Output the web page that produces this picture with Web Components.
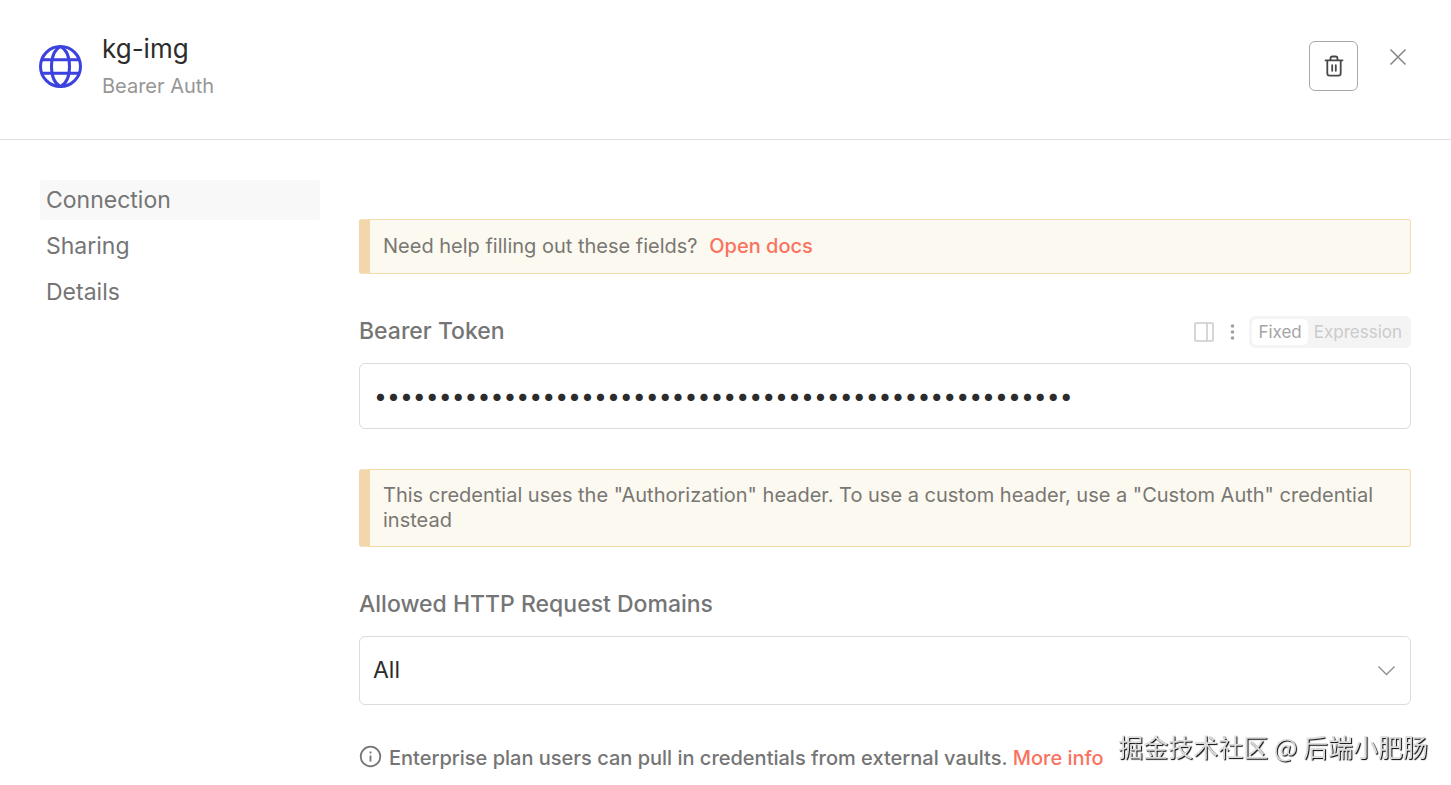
<!DOCTYPE html>
<html lang="en">
<head>
<meta charset="utf-8">
<title>kg-img – Bearer Auth</title>
<style>
  body { margin: 0; background: #fff; font-family: Inter, "Noto Sans CJK SC", sans-serif; color: #757575; }
</style>
</head>
<body>
<credential-dialog></credential-dialog>
<script>
const define = (name, html, setup) => {
  const tpl = document.createElement('template');
  tpl.innerHTML = '<style>*{box-sizing:border-box}button,input,select{font:inherit;color:inherit;margin:0}svg{display:block;flex:none}</style>' + html;
  customElements.define(name, class extends HTMLElement {
    constructor() {
      super();
      this.attachShadow({ mode: 'open' }).append(tpl.content.cloneNode(true));
    }
    connectedCallback() { if (setup) setup(this, this.shadowRoot); }
  });
};

define('credential-header', `
<style>
  :host { display: flex; align-items: flex-start; height: 140px; box-sizing: border-box; padding: 32px 44px 0 38px; border-bottom: 1px solid #dedede; }
  .globe { margin: 12px 19px 0 0; }
  .names { flex: 1; }
  h1 { margin: 0; font-size: 26px; line-height: 34px; font-weight: 400; color: #2c2c2c; }
  p { margin: 8px 0 0; font-size: 20px; line-height: 24px; color: #969696; }
  button { display: grid; place-items: center; padding: 0; background: none; border: 0; }
  .delete { width: 49px; height: 50px; margin: 9px 31px 0 0; border: 1px solid #a8a8a8; border-radius: 6px; color: #484848; }
  .close { margin-top: 16px; color: #858585; }
</style>
<svg class="globe" width="45" height="45" viewBox="0 0 45 45" fill="none" stroke="#3b42de" stroke-width="3" aria-hidden="true">
  <circle cx="22.500" cy="22.500" r="20"/><path d="M22.500 2.500c-6 3-9 11-9 20s3 17 9 20c6-3 9-11 9-20s-3-17-9-20M4.500 15.800h36M4.500 29.200h36"/>
</svg>
<div class="names"><h1><slot name="title"></slot></h1><p><slot name="type"></slot></p></div>
<button class="delete" aria-label="Delete">
  <svg width="20" height="22" viewBox="0 0 20 22" fill="none" stroke="currentColor" stroke-width="1.800" stroke-linecap="round" stroke-linejoin="round"><path d="M1.500 5.300h17M3.300 5.300v13q0 2.400 2.400 2.400h8.600q2.400 0 2.400-2.400v-13M6.500 5V3.500Q6.500 1.500 8.500 1.500h3q2 0 2 2V5M8.200 10.200v5.600M11.800 10.200v5.600"/></svg>
</button>
<button class="close" aria-label="Close">
  <svg width="18" height="18" viewBox="0 0 18 18" fill="none" stroke="currentColor" stroke-width="1.500"><path d="M1.500 1.500l15 15M16.500 1.500l-15 15"/></svg>
</button>`);

define('side-menu', `
<style>
  :host { display: block; width: 280px; flex: none; }
  nav { display: grid; gap: 6px; }
  ::slotted(a) { display: block; padding: 0 6px; border-radius: 3px; font-size: 23px; line-height: 40px; color: #757575; text-decoration: none; }
  ::slotted(a[aria-current]) { background: #f8f8f8; }
</style>
<nav><slot></slot></nav>`);

define('notice-bar', `
<style>
  :host { display: flex; align-items: center; box-sizing: border-box; min-height: 55px; padding: 13px; border: 1px solid #f3dcae; border-left: 11px solid #f3d6aa; border-radius: 3px; background: #fcf9f0; font-size: 20px; line-height: 25px; color: #787773; }
  ::slotted(a) { margin-left: 6px; color: #f9735f; font-weight: 500; text-decoration: none; }
</style>
<div><slot></slot></div>`);

define('mode-switch', `
<style>
  :host { display: flex; align-items: center; color: #b5b5b5; }
  button { display: block; border: 0; padding: 0; background: none; }
  .dots { margin: 0 14px 0 16px; }
  .group { display: flex; padding: 3px; border-radius: 6px; background: #f4f4f4; font-size: 17px; }
  .group button { height: 26px; line-height: 26px; padding: 0 6px; border-radius: 5px; color: #cbcbcb; }
  .group button[aria-pressed=true] { background: #fff; color: #a5a5a5; }
</style>
<button aria-label="Side panel"><svg width="20" height="20" viewBox="0 0 20 20" fill="none" stroke="#cacaca" stroke-width="1.500"><rect x="1" y="1" width="18" height="18" rx="1"/><path d="M13 1v18"/></svg></button>
<button class="dots" aria-label="Options"><svg width="5" height="18" viewBox="0 0 5 18" fill="#a0a0a0"><circle cx="2.500" cy="3" r="1.800"/><circle cx="2.500" cy="9" r="1.800"/><circle cx="2.500" cy="15" r="1.800"/></svg></button>
<div class="group"><button aria-pressed="true">Fixed</button><button aria-pressed="false">Expression</button></div>`);

define('token-field', `
<style>
  :host { display: block; }
  .top { display: flex; justify-content: space-between; align-items: flex-start; height: 32px; margin-bottom: 15px; }
  label { font-size: 23px; line-height: 30px; font-weight: 500; }
  input { display: block; width: 100%; height: 66px; padding: 0 14px; border: 1px solid #dcdcdc; border-radius: 6px; background: #fff; color: #2c2c2c; font-size: 23px; outline: 0; }
</style>
<div class="top"><label for="token">Bearer Token</label><mode-switch></mode-switch></div>
<input id="token" type="password">`, (host, root) => {
  root.querySelector('input').value = 'x'.repeat(54);
});

define('domain-field', `
<style>
  :host { display: block; }
  label { display: block; margin-bottom: 17px; font-size: 23px; line-height: 30px; font-weight: 500; }
  .box { display: grid; align-items: center; }
  select, svg { grid-area: 1 / 1; }
  select { appearance: none; width: 100%; height: 69px; padding: 0 13px 2px; border: 1px solid #dcdcdc; border-radius: 6px; background: #fff; color: #2c2c2c; font-size: 23px; }
  svg { justify-self: end; margin-right: 15px; pointer-events: none; z-index: 1; }
</style>
<label for="domains">Allowed HTTP Request Domains</label>
<div class="box"><select id="domains"><option>All</option></select>
<svg width="19" height="12" viewBox="0 0 19 12" fill="none" stroke="#8c8c8c" stroke-width="1.300"><path d="M1.500 1.500l8 8 8-8"/></svg></div>`);

define('info-tip', `
<style>
  :host { display: flex; align-items: flex-start; gap: 7px; font-size: 20px; line-height: 26px; font-weight: 500; }
  ::slotted(a) { color: #f9735f; text-decoration: none; }
</style>
<svg width="23" height="23" viewBox="0 0 23 23" fill="none" stroke="#757575" stroke-width="1.800" aria-hidden="true"><circle cx="11.500" cy="11.500" r="9.800"/><path d="M11.500 10.500v6M11.500 6.500v2"/></svg>
<span><slot></slot></span>`);

define('water-mark', `
<style>
  :host { position: fixed; right: 23px; bottom: 21px; font-family: "Noto Sans CJK SC", sans-serif; font-size: 25px; line-height: 36px; color: #dcdcdc; text-shadow: 1px 1px 1px #000; pointer-events: none; white-space: nowrap; }
</style>
<slot></slot>`);

define('credential-dialog', `
<style>
  :host { display: block; }
  .body { display: flex; gap: 39px; padding: 40px 40px 0; }
  main { flex: 1; min-width: 0; padding-top: 39px; }
  token-field { margin: 42px 0 40px; }
  domain-field { margin: 42px 0 40px; }
</style>
<credential-header><span slot="title">kg-img</span><span slot="type">Bearer Auth</span></credential-header>
<div class="body">
  <side-menu><a href="#connection" aria-current="page">Connection</a><a href="#sharing">Sharing</a><a href="#details">Details</a></side-menu>
  <main>
    <notice-bar>Need help filling out these fields? <a href="#docs">Open docs</a></notice-bar>
    <token-field></token-field>
    <notice-bar>This credential uses the "Authorization" header. To use a custom header, use a "Custom Auth" credential instead</notice-bar>
    <domain-field></domain-field>
    <info-tip>Enterprise plan users can pull in credentials from external vaults. <a href="#more">More info</a></info-tip>
  </main>
</div>
<water-mark>掘金技术社区 @ 后端小肥肠</water-mark>`);
</script>
</body>
</html>
